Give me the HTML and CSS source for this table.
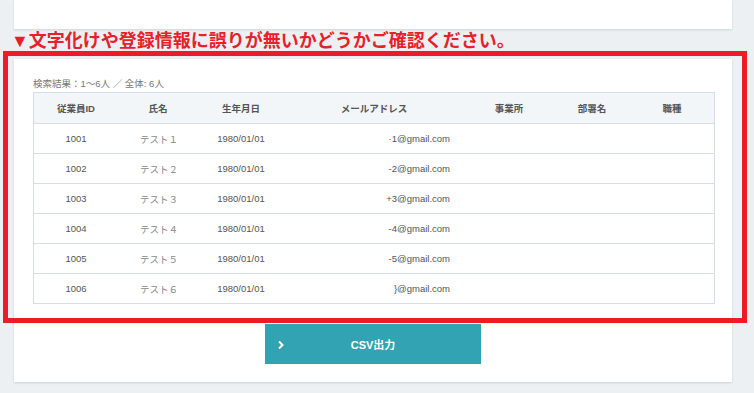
FILE: index.html
```html
<!DOCTYPE html>
<html lang="ja">
<head>
    <meta charset="utf-8">
    <title>確認</title>
    <link rel="stylesheet" href="styles.css">
</head>
<body>
    <div class="page">
        <div class="card card-top"></div>

        <h2 class="notice">▼文字化けや登録情報に誤りが無いかどうかご確認ください。</h2>

        <div class="card card-result">
            <p class="result-count">検索結果：1～6人 ／ 全体: 6人</p>
            <table class="staff-table">
                <thead>
                    <tr>
                        <th class="col-id">従業員ID</th>
                        <th class="col-name">氏名</th>
                        <th class="col-birth">生年月日</th>
                        <th class="col-mail">メールアドレス</th>
                        <th class="col-office">事業所</th>
                        <th class="col-dept">部署名</th>
                        <th class="col-job">職種</th>
                    </tr>
                </thead>
                <tbody>
                    <tr>
                        <td>1001</td><td class="name">テスト１</td><td>1980/01/01</td>
                        <td class="mail">·1@gmail.com</td><td></td><td></td><td></td>
                    </tr>
                    <tr>
                        <td>1002</td><td class="name">テスト２</td><td>1980/01/01</td>
                        <td class="mail">-2@gmail.com</td><td></td><td></td><td></td>
                    </tr>
                    <tr>
                        <td>1003</td><td class="name">テスト３</td><td>1980/01/01</td>
                        <td class="mail">+3@gmail.com</td><td></td><td></td><td></td>
                    </tr>
                    <tr>
                        <td>1004</td><td class="name">テスト４</td><td>1980/01/01</td>
                        <td class="mail">-4@gmail.com</td><td></td><td></td><td></td>
                    </tr>
                    <tr>
                        <td>1005</td><td class="name">テスト５</td><td>1980/01/01</td>
                        <td class="mail">-5@gmail.com</td><td></td><td></td><td></td>
                    </tr>
                    <tr>
                        <td>1006</td><td class="name">テスト６</td><td>1980/01/01</td>
                        <td class="mail">}@gmail.com</td><td></td><td></td><td></td>
                    </tr>
                </tbody>
            </table>

            <button class="csv-button" type="button">
                <svg class="chevron" width="8" height="10" viewBox="0 0 8 10">
                    <path d="M2 1.5 L5.5 5 L2 8.5" fill="none" stroke="#fff" stroke-width="2"/>
                </svg>
                CSV出力
            </button>
        </div>

        <!-- annotation frame drawn over the result card -->
        <div class="highlight-frame"></div>
    </div>
</body>
</html>
```

FILE: styles.css
```css
body {
    margin: 0;
    background-color: #edf0f3;
    font-family: "Liberation Sans", "Noto Sans CJK JP", sans-serif;
    color: #555;
    overflow: hidden;
}

.page {
    position: relative;
    width: 718px;
    margin-left: 14px;
    height: 393px;
}

.card {
    background-color: #fff;
    box-shadow: 0 1px 2px rgba(0, 0, 0, 0.12);
}

.card-top {
    height: 29px;
}

.notice {
    margin: 0 0 0 -3px;
    height: 30px;
    font-size: 18px;
    line-height: 20px;
    padding-top: 2px;
    box-sizing: border-box;
    font-weight: bold;
    color: #e8202a;
}

.card-result {
    padding: 19px 19px 18px;
}

.result-count {
    margin: 0 0 2px;
    font-size: 9.5px;
    line-height: 12px;
    color: #777;
}

.staff-table {
    width: 680px;
    border-collapse: collapse;
    table-layout: fixed;
    border: 1px solid #d6dde5;
    font-size: 9.5px;
}

.staff-table th {
    height: 30px;
    background-color: #f3f6f9;
    font-weight: bold;
    color: #555;
    border-bottom: 1px solid #d6dde5;
    padding: 0;
}

.staff-table td {
    height: 29px;
    text-align: center;
    border-bottom: 1px solid #d6dde5;
    padding: 0;
    color: #555;
}

.staff-table td.name {
    color: #888;
    text-align: left;
    padding-left: 22px;
}

.col-id { width: 84px; }
.col-name { width: 80px; }
.col-birth { width: 86px; }
.col-mail { width: 180px; }
.col-office { width: 90px; }
.col-dept { width: 76px; }
.col-job { width: 84px; }

.staff-table td.mail {
    text-align: right;
    padding-right: 14px;
}

.csv-button {
    display: flex;
    align-items: center;
    justify-content: center;
    position: relative;
    width: 216px;
    height: 40px;
    margin: 20px auto 0;
    border: none;
    background-color: #32a3b3;
    color: #fff;
    font-family: "Liberation Sans", "Noto Sans CJK JP", sans-serif;
    font-size: 11px;
    font-weight: bold;
    cursor: pointer;
}

.chevron {
    position: absolute;
    left: 12px;
    top: 16px;
}

.highlight-frame {
    position: absolute;
    left: -11px;
    top: 51px;
    width: 734px;
    height: 262px;
    border: 5px solid #ec1c24;
}
```
